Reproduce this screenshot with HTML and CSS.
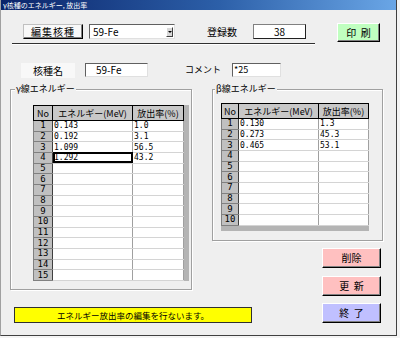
FILE: index.html
```html
<!DOCTYPE html>
<html lang="ja">
<head>
    <meta charset="UTF-8">
    <title>γ核種のエネルギー, 放出率</title>
    <link rel="stylesheet" href="styles.css">
</head>
<body>
    <div class="window">
        <div class="titlebar">γ核種のエネルギー, 放出率</div>

        <div class="top-row">
            <button class="btn btn-edit">編集核種</button>
            <div class="combo">
                <span>59-Fe</span>
                <span class="combo-arrow"></span>
            </div>
            <span class="label count-label">登録数</span>
            <div class="field field-count">38</div>
            <button class="btn btn-print">印&nbsp;&nbsp;刷</button>
        </div>

        <div class="rule"></div>

        <div class="info-row">
            <span class="label name-label">核種名</span>
            <div class="field field-name">59-Fe</div>
            <span class="label comment-label">コメント</span>
            <div class="field field-comment">*25</div>
        </div>

        <div class="main">
            <div class="group group-gamma">
                <span class="caption caption-gamma">γ線エネルギー</span>
                <div class="grid-wrap gamma-wrap">
                    <table class="grid gamma-grid">
                        <colgroup><col class="c-no"><col class="c-energy"><col class="c-rate"></colgroup>
                        <tr><th>No</th><th>エネルギー(MeV)</th><th>放出率(%)</th></tr>
                        <tr><td class="no">1</td><td>0.143</td><td>1.0</td></tr>
                        <tr><td class="no">2</td><td>0.192</td><td>3.1</td></tr>
                        <tr><td class="no">3</td><td>1.099</td><td>56.5</td></tr>
                        <tr><td class="no">4</td><td class="current">1.292</td><td>43.2</td></tr>
                        <tr><td class="no">5</td><td></td><td></td></tr>
                        <tr><td class="no">6</td><td></td><td></td></tr>
                        <tr><td class="no">7</td><td></td><td></td></tr>
                        <tr><td class="no">8</td><td></td><td></td></tr>
                        <tr><td class="no">9</td><td></td><td></td></tr>
                        <tr><td class="no">10</td><td></td><td></td></tr>
                        <tr><td class="no">11</td><td></td><td></td></tr>
                        <tr><td class="no">12</td><td></td><td></td></tr>
                        <tr><td class="no">13</td><td></td><td></td></tr>
                        <tr><td class="no">14</td><td></td><td></td></tr>
                        <tr><td class="no">15</td><td></td><td></td></tr>
                    </table>
                </div>
            </div>

            <div class="side">
                <div class="group group-beta">
                    <span class="caption caption-beta">β線エネルギー</span>
                    <div class="grid-wrap beta-wrap">
                        <table class="grid beta-grid">
                            <colgroup><col class="c-no"><col class="c-energy"><col class="c-rate"></colgroup>
                            <tr><th>No</th><th>エネルギー(MeV)</th><th>放出率(%)</th></tr>
                            <tr><td class="no">1</td><td>0.130</td><td>1.3</td></tr>
                            <tr><td class="no">2</td><td>0.273</td><td>45.3</td></tr>
                            <tr><td class="no">3</td><td>0.465</td><td>53.1</td></tr>
                            <tr><td class="no">4</td><td></td><td></td></tr>
                            <tr><td class="no">5</td><td></td><td></td></tr>
                            <tr><td class="no">6</td><td></td><td></td></tr>
                            <tr><td class="no">7</td><td></td><td></td></tr>
                            <tr><td class="no">8</td><td></td><td></td></tr>
                            <tr><td class="no">9</td><td></td><td></td></tr>
                            <tr><td class="no">10</td><td></td><td></td></tr>
                        </table>
                    </div>
                </div>
                <button class="btn btn-pink btn-delete">削除</button>
                <button class="btn btn-pink btn-update">更&nbsp;&nbsp;新</button>
            </div>
        </div>

        <div class="bottom-row">
            <div class="message">エネルギー放出率の編集を行ないます。</div>
            <button class="btn btn-quit">終&nbsp;&nbsp;了</button>
        </div>
    </div>
</body>
</html>
```

FILE: styles.css
```css
* {
    margin: 0;
    padding: 0;
    box-sizing: border-box;
}

body {
    font-family: "Noto Sans CJK JP", sans-serif;
    font-size: 10px;
    color: #000;
    background-color: #f4f4f4;
}

.window {
    width: 397px;
    height: 336px;
    background-color: #efefef;
    border-left: 1px solid #a0a0a0;
    border-right: 1px solid #404040;
    border-bottom: 1px solid #404040;
}

.titlebar {
    height: 10px;
    padding-left: 2px;
    background: linear-gradient(to right, #0a246a, #2c5fa8 55%, #6aa6e6);
    color: #fff;
    font-size: 7px;
    line-height: 10px;
    white-space: nowrap;
}

/* buttons */
.btn {
    font-family: "Noto Sans CJK JP", sans-serif;
    font-size: 10px;
    color: #000;
    border: 1px solid;
    border-color: #fff #000 #000 #fff;
    box-shadow: inset -1px -1px 0 #808080;
    cursor: pointer;
}

.btn-edit {
    margin-left: 22px;
    width: 60px;
    height: 15px;
    line-height: 12px;
    letter-spacing: 1px;
    background-color: #f8f8f8;
    border-left-color: #c0c0c0;
    border-top-color: #c0c0c0;
}

.btn-print {
    margin: -1px 0 0 31px;
    width: 43px;
    height: 19px;
    background-color: #c0ffc0;
}

.btn-pink {
    width: 59px;
    height: 20px;
    background-color: #ffc0c0;
    align-self: flex-end;
    margin-right: 2px;
}

.btn-delete {
    margin-top: 7px;
}

.btn-update {
    margin-top: 8px;
}

.btn-quit {
    margin-left: 70px;
    width: 59px;
    height: 20px;
    background-color: #c0c0ff;
}

/* top rows */
.top-row {
    display: flex;
    align-items: flex-start;
    margin-top: 14px;
}

.combo {
    display: flex;
    align-items: center;
    justify-content: space-between;
    margin-left: 6px;
    width: 86px;
    height: 15px;
    padding: 0 1px 0 3px;
    background-color: #fff;
    border: 1px solid;
    border-color: #606060 #e0e0e0 #e0e0e0 #606060;
    font-size: 10px;
}

.combo-arrow {
    position: relative;
    width: 7px;
    height: 10px;
    background-color: #d8d8d8;
    border: 1px solid;
    border-color: #fff #404040 #404040 #fff;
}

.combo-arrow::after {
    content: "";
    position: absolute;
    left: 1px;
    top: 3px;
    border-left: 2px solid transparent;
    border-right: 2px solid transparent;
    border-top: 2px solid #000;
}

.label {
    font-size: 10px;
    white-space: nowrap;
}

.count-label {
    margin-left: 32px;
    width: 31px;
    line-height: 15px;
}

.field {
    height: 15px;
    background-color: #fff;
    border: 1px solid;
    border-color: #606060 #e0e0e0 #e0e0e0 #606060;
    font-size: 10px;
    line-height: 13px;
    white-space: nowrap;
}

.field-count {
    margin-left: 15px;
    width: 53px;
    text-align: center;
    border-color: #808080 #202020 #202020 #808080;
}

.rule {
    margin: 1px 0 0 11px;
    width: 303px;
    border-top: 1px solid #303030;
    border-bottom: 1px solid #fff;
}

.info-row {
    display: flex;
    align-items: flex-start;
    margin-top: 18px;
}

.name-label {
    margin-left: 20px;
    width: 54px;
    height: 15px;
    line-height: 15px;
    text-align: center;
    background-color: #f8f8f8;
}

.field-name {
    margin-left: 10px;
    width: 63px;
    height: 14px;
    line-height: 12px;
    padding-left: 10px;
}

.comment-label {
    margin-left: 37px;
    width: 33px;
    font-size: 9px;
    line-height: 14px;
}

.field-comment {
    margin-left: 14px;
    width: 49px;
    height: 14px;
    line-height: 12px;
    padding-left: 1px;
    font-size: 9px;
}

/* group boxes */
.main {
    display: flex;
    align-items: flex-start;
    margin-top: 11px;
}

.group {
    position: relative;
    border: 1px solid #a0a0a0;
    box-shadow: 1px 1px 0 #fff, inset 1px 1px 0 #fff;
}

.caption {
    position: absolute;
    top: -7px;
    padding: 0 1px;
    background-color: #efefef;
    font-size: 9px;
    line-height: 12px;
    white-space: nowrap;
}

.caption-gamma {
    left: 4px;
}

.caption-beta {
    left: 2px;
}

.group-gamma {
    margin-left: 9px;
    width: 182px;
    padding-bottom: 8px;
}

.side {
    display: flex;
    flex-direction: column;
    margin-left: 20px;
    width: 171px;
}

.group-beta {
    width: 171px;
    padding-bottom: 9px;
}

/* grids */
.grid-wrap {
    width: fit-content;
}

.gamma-wrap {
    margin: 15px 0 0 22px;
    border-right: 5px solid #b4b4b4;
}

.beta-wrap {
    margin: 13px 0 0 8px;
    border-bottom: 5px solid #b4b4b4;
}

.grid {
    border-collapse: collapse;
    table-layout: fixed;
    background-color: #fff;
    border: 1px solid #000;
    border-left-color: #808080;
    font-family: "DejaVu Sans Mono", monospace;
    font-size: 8px;
}

.gamma-grid {
    width: 150px;
}

.gamma-grid .c-no { width: 19px; }
.gamma-grid .c-energy { width: 80px; }
.gamma-grid .c-rate { width: 51px; }

.beta-grid {
    width: 147px;
}

.beta-grid .c-no { width: 17px; }
.beta-grid .c-energy { width: 80px; }
.beta-grid .c-rate { width: 50px; }

.grid th {
    height: 15px;
    padding: 0;
    background-color: #c8c8c8;
    border: 1px solid #000;
    font-family: "Noto Sans CJK JP", sans-serif;
    font-size: 9px;
    font-weight: normal;
    line-height: 13px;
    white-space: nowrap;
    overflow: hidden;
}

.grid td {
    height: 10.67px;
    padding: 0 0 0 1px;
    border-bottom: 1px solid #d4d4d4;
    border-right: 1px solid #a0a0a0;
    line-height: 9px;
    white-space: nowrap;
}

.grid td.no {
    padding: 0;
    background-color: #c0c0c0;
    border-bottom: 1px solid #808080;
    border-right: 1px solid #404040;
    text-align: center;
    font-size: 9px;
}

.grid td.current {
    outline: 2px solid #000;
    outline-offset: -2px;
}

/* footer */
.bottom-row {
    display: flex;
    align-items: flex-start;
    margin-top: 7px;
}

.message {
    margin: 4px 0 0 13px;
    width: 238px;
    height: 16px;
    background-color: #ffff00;
    border: 1px solid #303030;
    font-size: 8.5px;
    line-height: 14px;
    text-align: center;
    white-space: nowrap;
}
```
